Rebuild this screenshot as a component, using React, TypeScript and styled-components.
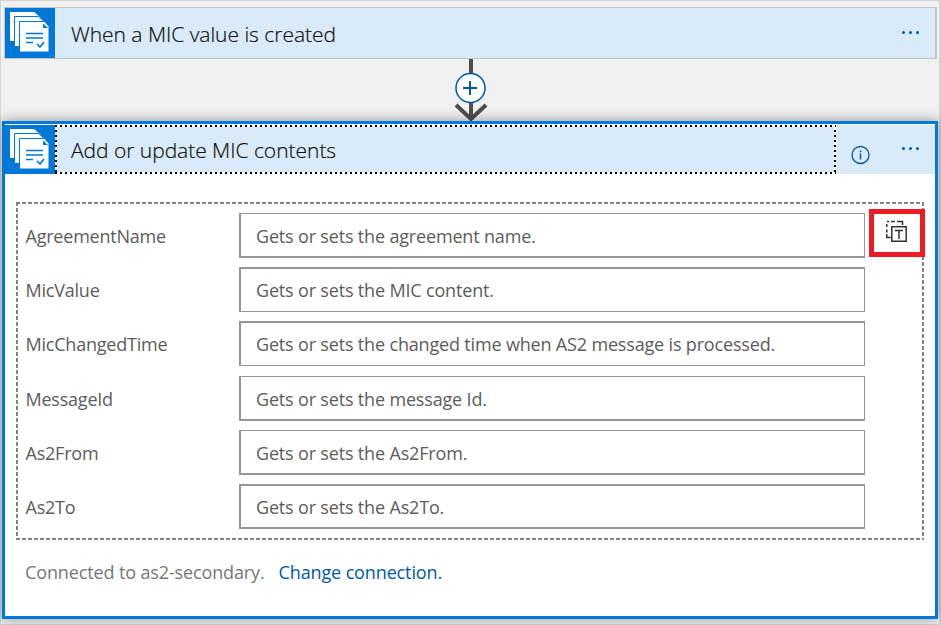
import React from "react";
import styled, { createGlobalStyle } from "styled-components";

const GlobalStyle = createGlobalStyle`
  * { box-sizing: border-box; }
  body { margin: 0; overflow: hidden; }
  button, input { font: inherit; }
`;

const Designer = styled.main`
  width: 941px;
  height: 625px;
  padding: 6px 0 0 1px;
  background: #f1f1f1;
  border: solid #d4d4d4;
  border-width: 1px 2px 1px 1px;
  font-family: "Open Sans", "Noto Sans", sans-serif;
  display: flex;
  flex-direction: column;
`;

const TriggerCard = styled.section`
  width: 933px;
  height: 52px;
  margin-left: 2px;
  flex: none;
  display: flex;
  background: #d9eaf8;
  border: solid #c2c4c6;
  border-width: 1px 2px 1px 1px;
`;

const IconTile = styled.div`
  width: 50px;
  flex: none;
  background: #0078d7;
  svg { display: block; }
`;

const Title = styled.h2`
  flex: 1;
  margin: 0;
  padding-left: 16px;
  font-size: 21px;
  font-weight: 300;
  letter-spacing: -0.03px;
  line-height: 52px;
  color: #111;
  -webkit-text-stroke: 0.2px #111;
  white-space: nowrap;
`;

const MenuButton = styled.button`
  width: 52px;
  padding: 0;
  border: 0;
  background: none;
  svg { display: block; }
`;

const Connector = styled.div`
  height: 62px;
  flex: none;
  margin-left: 438px;
  svg { display: block; }
`;

const ActionCard = styled.section`
  width: 936px;
  height: 498px;
  flex: none;
  background: #fff;
  border: 3px solid #0078d7;
  box-shadow: 0 0 12px rgba(0, 0, 0, 0.4);
`;

const ActionHeader = styled.header`
  height: 49px;
  margin-top: 1px;
  display: flex;
  background: #d9eaf8;
`;

const dottedX = "repeating-linear-gradient(90deg, #000 0 2px, #fff 2px 5px)";
const dottedY = "repeating-linear-gradient(#000 0 2px, #fff 2px 5px)";

const FocusedTitle = styled(Title)`
  flex: none;
  width: 781px;
  padding-left: 16px;
  line-height: 50px;
  background:
    ${dottedX} 0 0 / 100% 2px no-repeat,
    ${dottedX} 0 100% / 100% 2px no-repeat,
    ${dottedY} 0 0 / 2px 100% no-repeat,
    ${dottedY} 100% 0 / 2px 100% no-repeat,
    #d9eaf8;
`;

const HeaderTools = styled.div`
  flex: 1;
  display: flex;
  justify-content: space-between;
`;

const dashedX = "repeating-linear-gradient(90deg, #838383 0 4px, #fff 4px 6px)";
const dashedY = "repeating-linear-gradient(#838383 0 4px, #fff 4px 6px)";

const Fields = styled.div`
  width: 908px;
  height: 338px;
  margin: 28px 0 0 11px;
  padding: 11px 0 0 10px;
  background:
    ${dashedX} 0 0 / 100% 2px no-repeat,
    ${dashedX} 0 100% / 100% 2px no-repeat,
    ${dashedY} 0 0 / 2px 100% no-repeat,
    ${dashedY} 100% 0 / 2px 100% no-repeat;
  display: flex;
`;

const FieldList = styled.div`
  width: 839px;
  display: flex;
  flex-direction: column;
  justify-content: space-between;
  height: 316px;
`;

const FieldRow = styled.label`
  display: flex;
  height: 45px;
`;

const FieldLabel = styled.span`
  width: 213px;
  font-size: 18px;
  line-height: 47px;
  letter-spacing: -0.22px;
  text-indent: -0.5px;
  color: #5c5c5c;
`;

const borderWidths = {
  top: "2px 1px 1px 2px",
  bottom: "1px 1px 2px 2px",
  both: "2px 1px 2px 2px",
};

const FieldInput = styled.span<{ $heavy: keyof typeof borderWidths }>`
  width: 626px;
  padding-left: 15px;
  border: solid #969696;
  border-width: ${(p) => borderWidths[p.$heavy]};
  font-size: 18px;
  line-height: ${(p) => (p.$heavy === "bottom" ? "44px" : "42px")};
  letter-spacing: -0.17px;
  color: #5c5c5c;
  white-space: nowrap;
`;

const DynamicButton = styled.button`
  flex: none;
  width: 56px;
  height: 48px;
  margin: -4px 0 0 4px;
  padding: 0;
  background: #fff;
  border: 5px solid #ed1c24;
  position: relative;
  svg { display: block; }
`;

const Footer = styled.footer`
  display: flex;
  gap: 14px;
  margin: 18px 0 0 20px;
  font-size: 18px;
  line-height: 28px;
  letter-spacing: -0.13px;
  color: #777;
  white-space: nowrap;
`;

const Link = styled.a`
  color: #0058ad;
`;

const DocumentsIcon = () => (
  <svg width="50" height="50" viewBox="0 0 50 50">
    <path d="M5 4h24l7 6H9v23H5z" fill="#fff" />
    <path d="M9.500 8.500h24l7 6h-26v24h-5z" fill="#fff" stroke="#0078d7" />
    <path d="M14.500 13.500h25l4.500 5v25.500H14.500z" fill="#fff" stroke="#0078d7" />
    <path d="M38 15.500v4.500h5z" fill="#0078d7" />
    <path d="M21 25.500h17M21 30h17M21 34.500h7M32 36l3 3 4-5" fill="none" stroke="#0078d7" strokeWidth="1.7" />
  </svg>
);

const Dots = ({ y }: { y: number }) => (
  <svg width="52" height="48" fill="#0058ad">
    <circle cx="20.5" cy={y} r="1.5" />
    <circle cx="27.5" cy={y} r="1.5" />
    <circle cx="34.5" cy={y} r="1.5" />
  </svg>
);

const fields: { name: string; hint: string; heavy: keyof typeof borderWidths }[] = [
  { name: "AgreementName", hint: "Gets or sets the agreement name.", heavy: "bottom" },
  { name: "MicValue", hint: "Gets or sets the MIC content.", heavy: "top" },
  { name: "MicChangedTime", hint: "Gets or sets the changed time when AS2 message is processed.", heavy: "top" },
  { name: "MessageId", hint: "Gets or sets the message Id.", heavy: "bottom" },
  { name: "As2From", hint: "Gets or sets the As2From.", heavy: "bottom" },
  { name: "As2To", hint: "Gets or sets the As2To.", heavy: "both" },
];

export default function App() {
  return (
    <>
      <GlobalStyle />
      <Designer>
        <TriggerCard>
          <IconTile><DocumentsIcon /></IconTile>
          <Title>When a MIC value is created</Title>
          <MenuButton aria-label="Trigger menu"><Dots y={23.5} /></MenuButton>
        </TriggerCard>
        <Connector>
          <svg width="64" height="62" fill="none">
            <path d="M31 0v61M16 46l15 14 15-14" stroke="#4d4d4d" strokeWidth="4" />
            <circle cx="30.5" cy="29" r="14.5" fill="#fff" stroke="#0058ad" strokeWidth="1.5" />
            <path d="M23 29h14M30 22v14" stroke="#0058ad" strokeWidth="2" />
          </svg>
        </Connector>
        <ActionCard>
          <ActionHeader>
            <IconTile><DocumentsIcon /></IconTile>
            <FocusedTitle>Add or update MIC contents</FocusedTitle>
            <HeaderTools>
              <svg width="46" height="48" fill="none" stroke="#0058ad">
                <circle cx="24.5" cy="30" r="8.5" strokeWidth="1.3" />
                <path d="M24.5 28.5v6M24.5 25.500v1.700" strokeWidth="1.5" />
              </svg>
              <MenuButton aria-label="Action menu"><Dots y={22.5} /></MenuButton>
            </HeaderTools>
          </ActionHeader>
          <Fields>
            <FieldList>
              {fields.map((f) => (
                <FieldRow key={f.name}>
                  <FieldLabel>{f.name}</FieldLabel>
                  <FieldInput $heavy={f.heavy}>{f.hint}</FieldInput>
                </FieldRow>
              ))}
            </FieldList>
            <DynamicButton aria-label="Switch to text mode">
              <svg width="46" height="38" fill="none" stroke="#333" strokeWidth="1.5">
                <path d="M13 7.500h2M17 7.500h4M23 7.500h5.500v3.500M12.800 10v3M12.800 15.500v3M12.800 20v3.500h4" />
                <path d="M17.800 12.800h14.400v14.400H17.800z" />
                <path d="M21 16.500h8M25 16.500v8.500" />
              </svg>
            </DynamicButton>
          </Fields>
          <Footer>
            <span>Connected to as2-secondary.</span>
            <Link>Change connection.</Link>
          </Footer>
        </ActionCard>
      </Designer>
    </>
  );
}
